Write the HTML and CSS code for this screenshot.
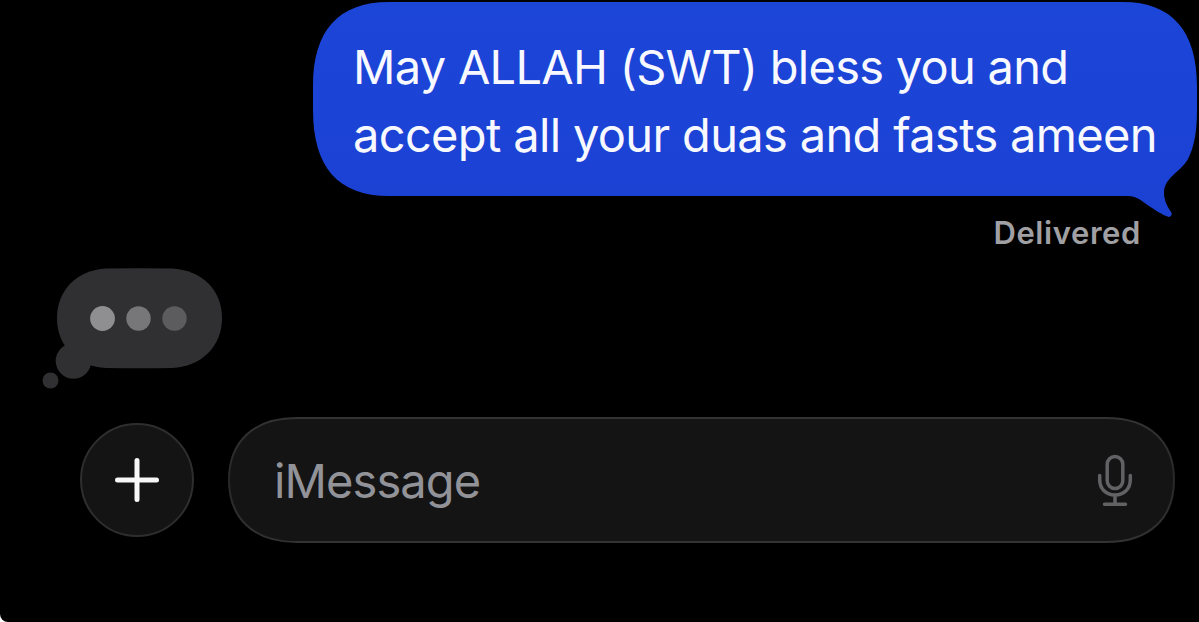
FILE: index.html
```html
<!DOCTYPE html>
<html lang="en">

<head>
    <meta charset="UTF-8">
    <meta name="viewport" content="width=device-width, initial-scale=1.0">
    <title>Messages</title>

    <link rel="stylesheet" href="styles.css">
</head>

<body>
    <div class="chat">
        <!-- Sent message -->
        <div class="sent">
            <svg class="bubble-shape" viewBox="0 0 886 220">
                <defs>
                    <linearGradient id="blue" x1="0" y1="0" x2="0" y2="1">
                        <stop offset="0" stop-color="#1c46d8" />
                        <stop offset="1" stop-color="#1b41d3" />
                    </linearGradient>
                </defs>
                <path fill="url(#blue)" d="M76 2H810C859 2 884 31 884 86V110C884 132 881 147 875 159C868 172 851 177 851 193C851 200 854 206 858 212Q860 216 856 217C851 216 840 209 829 201Q822 196 815 196H76C25 196 0 167 0 110V86C0 31 25 2 76 2Z" />
            </svg>
            <p class="sent-text">
                <span class="line line-one">May ALLAH (SWT) bless you and</span>
                <span class="line line-two">accept all your duas and fasts ameen</span>
            </p>
        </div>
        <div class="status">Delivered</div>

        <!-- Typing indicator -->
        <svg class="typing" viewBox="0 0 184 124">
            <g fill="#303032">
                <path d="M64 1.500Q97 .8 130 1.500C160 3 180 23 180 51C180 79 160 99.500 130 101Q97 101.700 64 101C35 99.500 15 79 15 51C15 23 35 3 64 1.500Z" />
                <circle cx="31.500" cy="94" r="17.800" />
                <circle cx="8.500" cy="113.500" r="8" />
            </g>
            <circle cx="60.500" cy="51.500" r="12.400" fill="#8f8f91" />
            <circle cx="96.500" cy="51.500" r="12.200" fill="#777779" />
            <circle cx="132.500" cy="51.500" r="12.200" fill="#5c5c5e" />
        </svg>

        <!-- Message input -->
        <div class="composer">
            <button class="add" aria-label="Add">
                <svg viewBox="0 0 46 46" width="46" height="46">
                    <path d="M3.500 23H42.500M23 3.500V42.500" fill="none" stroke="#f7f7f7" stroke-width="5" stroke-linecap="round" />
                </svg>
            </button>
            <div class="field">
                <svg class="field-shape" viewBox="0 0 947 126">
                    <defs>
                        <linearGradient id="edge" x1="0" y1="0" x2="0" y2="1">
                            <stop offset="0" stop-color="#333334" />
                            <stop offset="0.5" stop-color="#28282a" />
                            <stop offset="1" stop-color="#333334" />
                        </linearGradient>
                    </defs>
                    <path fill="#141414" stroke="url(#edge)" stroke-width="2" d="M69 1H878C922 1 946 25 946 63C946 101 922 125 878 125H69C25 125 1 101 1 63C1 25 25 1 69 1Z" />
                </svg>
                <span class="placeholder">iMessage</span>
                <svg class="mic" viewBox="0 0 36 52" width="36" height="52">
                    <g fill="none" stroke="#626265" stroke-width="3.500" stroke-linecap="round">
                        <rect x="10.200" y="2.500" width="15.600" height="32" rx="7.800" />
                        <path d="M2.700 21.500V25.500C2.700 35 9 41 18 41S33.300 35 33.300 25.500V21.500M18 41.500V50M7.500 50.200H28.500" />
                    </g>
                </svg>
            </div>
        </div>
    </div>
</body>

</html>
```

FILE: styles.css
```css
body {
    margin: 0;
    background: white;
    font-family: Inter, "Liberation Sans", sans-serif;
}

.chat {
    display: flex;
    flex-direction: column;
    box-sizing: border-box;
    height: 622px;
    overflow: hidden;
    background: black;
    border-bottom-left-radius: 8px;
}

.sent {
    position: relative;
    align-self: flex-end;
    box-sizing: border-box;
    width: 886px;
    height: 213px;
    padding: 33px 0 0 40px;
}

.bubble-shape {
    position: absolute;
    top: 0;
    left: 0;
    width: 886px;
    height: 220px;
}

.sent-text {
    position: relative;
    margin: 0;
    color: #f8f8ff;
    font-size: 47px;
    line-height: 68px;
}

.line {
    display: block;
    white-space: nowrap;
}

.line-one {
    letter-spacing: -0.72px;
}

.line-two {
    letter-spacing: -0.66px;
}

.status {
    align-self: flex-end;
    margin-right: 58px;
    color: #a0a0a4;
    font-size: 31px;
    font-weight: 600;
    letter-spacing: 0.6px;
    line-height: 39px;
}

.typing {
    width: 184px;
    height: 124px;
    margin: 15px 0 0 42px;
}

.composer {
    display: flex;
    align-items: center;
    gap: 34px;
    margin: 26px 24px 0 80px;
}

.add {
    display: flex;
    align-items: center;
    justify-content: center;
    box-sizing: border-box;
    width: 114px;
    height: 114px;
    padding: 0;
    border: 2px solid #2e2e2f;
    border-radius: 50%;
    background: #141414;
}

.field {
    position: relative;
    display: flex;
    align-items: center;
    justify-content: space-between;
    box-sizing: border-box;
    width: 947px;
    height: 126px;
    padding: 0 42px 0 46px;
}

.field-shape {
    position: absolute;
    top: 0;
    left: 0;
    width: 947px;
    height: 126px;
}

.placeholder {
    position: relative;
    color: #929299;
    font-size: 47px;
    letter-spacing: -0.9px;
}

.mic {
    position: relative;
}
```
